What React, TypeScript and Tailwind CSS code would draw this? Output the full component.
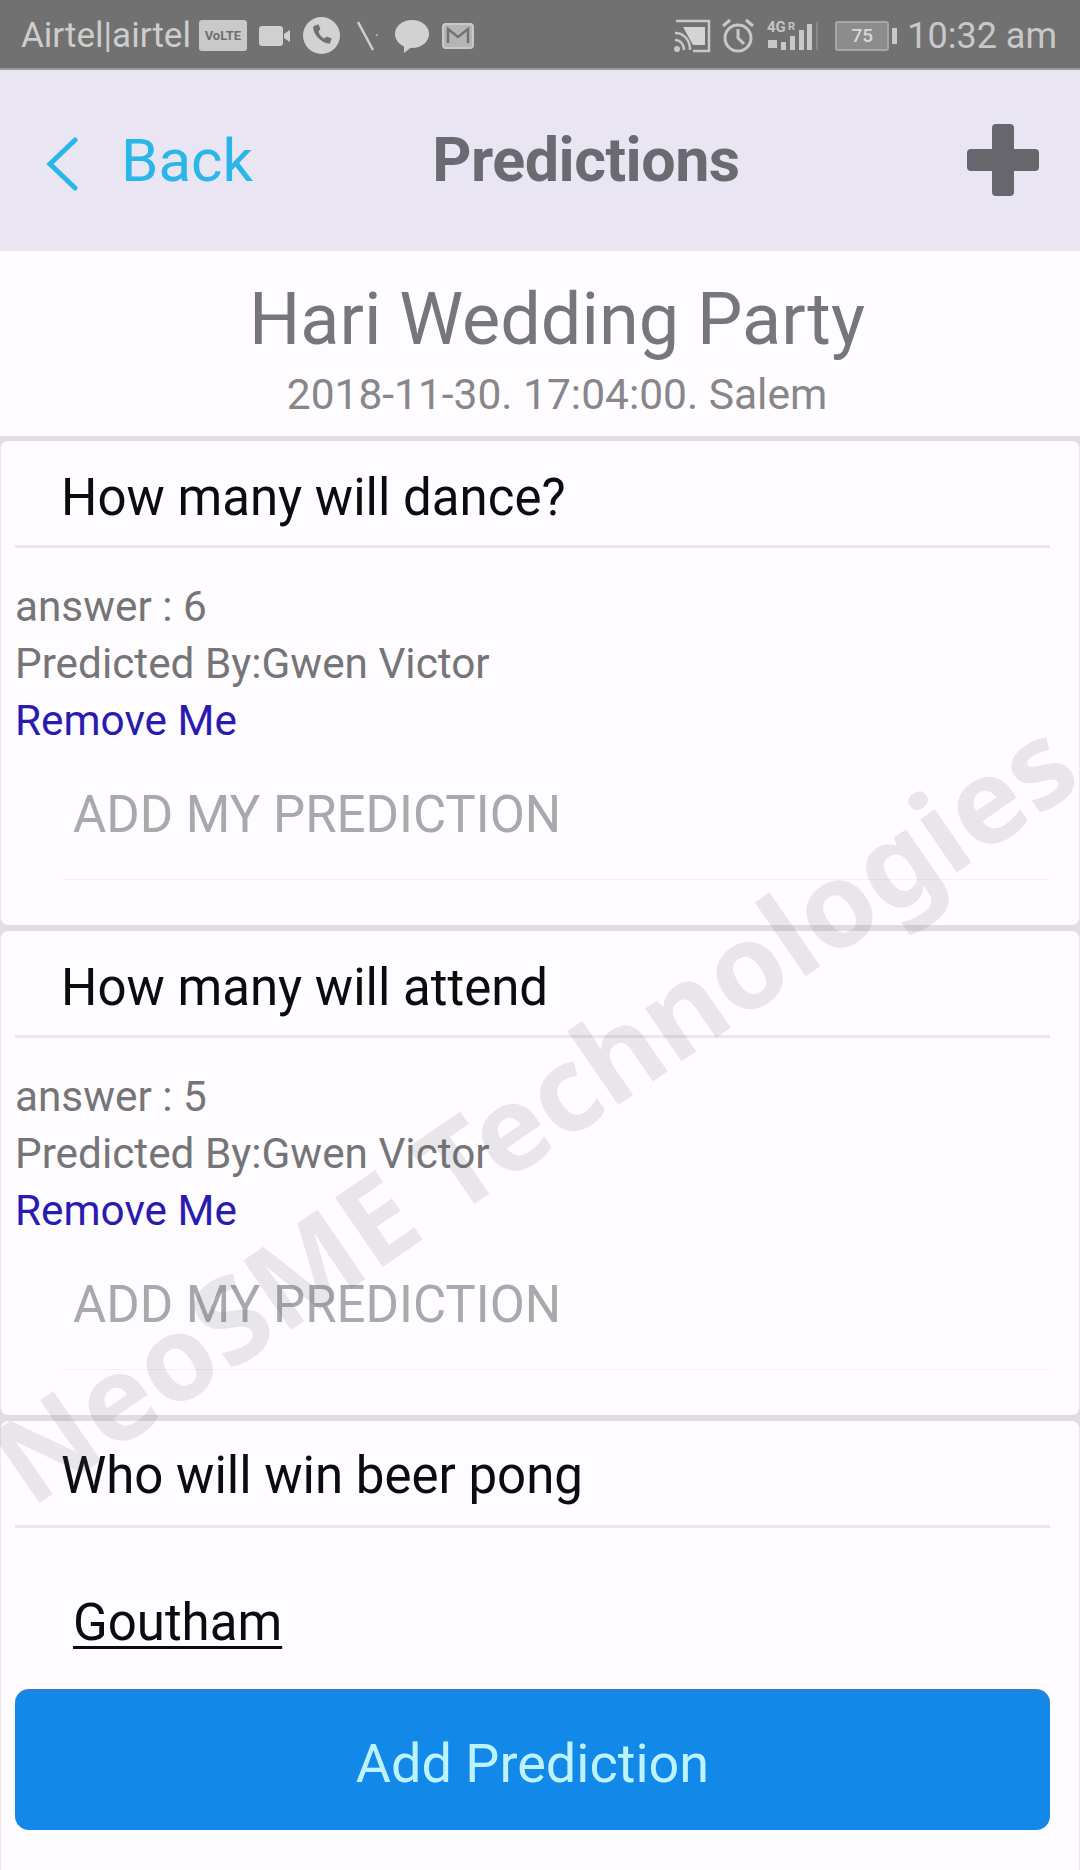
const roboto = "font-['Roboto',sans-serif]";

function StatusIcons() {
  return (
    <div className="flex items-center gap-[12px] ml-[8px]">
      <div className="w-[48px] h-[31px] rounded-[3px] bg-[#c9c9c9] flex items-center justify-center text-[13px] leading-none font-bold text-[#6f6f6f]">VoLTE</div>
      <svg width="32" height="24" viewBox="0 0 32 24"><rect x="0" y="2" width="24" height="20" rx="3" fill="#d0d0d0" /><path d="M25 10l6-4v12l-6-4z" fill="#d0d0d0" /></svg>
      <svg width="37" height="37" viewBox="0 0 36 36"><circle cx="18" cy="18" r="18" fill="#d2d2d2" /><path d="M10 9c-1 6 6 16 16 17l2-5-5-2-2 2c-3-1-5-4-6-7l2-2-2-5z" fill="#717171" /></svg>
      <svg width="24" height="36" viewBox="0 0 24 36" className="ml-[3px]"><path d="M3 4l15 28" stroke="#cfcfcf" strokeWidth="2.5" /><circle cx="22" cy="17" r="1" fill="#bbb" /></svg>
      <svg width="36" height="36" viewBox="0 0 36 36" className="ml-[3px]"><ellipse cx="18" cy="16" rx="17" ry="14" fill="#d2d2d2" /><path d="M10 26l0 9 9-7z" fill="#d2d2d2" /></svg>
      <svg width="32" height="26" viewBox="0 0 32 26"><rect x="1" y="1" width="30" height="24" rx="3" fill="#b5b5b5" stroke="#c9c9c9" strokeWidth="2" /><path d="M6 20V6l10 8 10-8v14" fill="none" stroke="#717171" strokeWidth="2.5" /></svg>
    </div>
  );
}

function StatusRight() {
  return (
    <div className="flex items-center">
      <svg width="38" height="34" viewBox="0 0 38 34"><path d="M3 2h33v30H20" fill="none" stroke="#c8c8c8" strokeWidth="2.5" /><path d="M10 8h22v18H20z" fill="#d4d4d4" /><path d="M2 14c9 0 15 7 15 17M2 21c5 0 9 4 9 10" fill="none" stroke="#c8c8c8" strokeWidth="2.5" /><circle cx="4" cy="30" r="3" fill="#c8c8c8" /></svg>
      <svg width="34" height="36" viewBox="0 0 34 36" className="ml-[10px]"><circle cx="17" cy="20" r="13" fill="none" stroke="#c8c8c8" strokeWidth="3" /><path d="M17 11v9l6 6M2 8l7-6M32 8l-7-6" fill="none" stroke="#c8c8c8" strokeWidth="3" /></svg>
      <svg width="54" height="36" viewBox="0 0 54 36" className="ml-[11px]">
        <text x="1" y="14" fontSize="15" fontWeight="700" fill="#c4c4c4" fontFamily="Roboto">4G</text>
        <text x="22" y="12" fontSize="11" fontWeight="700" fill="#c4c4c4" fontFamily="Roboto">R</text>
        <path d="M2 22h9v8H2zM15 24h5v8h-5zM24 18h5v14h-5zM33 12h5v20h-5zM41 6h5v26h-5z" fill="#c8c8c8" />
        <path d="M50 4h2v28h-2z" fill="#8a8a8a" />
      </svg>
      <div className="ml-[15px] flex items-center">
        <div className="w-[54px] h-[30px] rounded-[3px] border-2 border-[#a5a5a5] bg-[#8c8c8c] flex items-center justify-center text-[19px] leading-none font-medium text-[#d8d8d8]">75</div>
        <div className="ml-[3px] w-[5px] h-[16px] bg-[#c8c8c8]" />
      </div>
      <span className="ml-[10px] text-[36px] leading-none text-[#c8c8c8]">10:32 am</span>
    </div>
  );
}

function QuestionCard({ question, answer }: { question: string; answer: string }) {
  return (
    <div className="h-[484px] rounded-[8px] border-x border-[#ece9ee] bg-[#fefcfe] pl-[14px] pr-[29px]">
      <div className="h-[107px] border-b-[3px] border-[#e9e7eb] pl-[46px] pt-[10px] flex items-center text-[51px] text-[#0c0c0e]">{question}</div>
      <div className="pt-[30px] text-[42.3px] leading-[57px] text-[#757577]">
        <p>answer : {answer}</p>
        <p>Predicted By:Gwen Victor</p>
        <p className="text-[#2a1bb0]">Remove Me</p>
      </div>
      <div className="ml-[47px] mt-[8px] h-[123px] border-b border-[#f2f0f3] pl-[11px] pb-[7px] flex items-center text-[51px] leading-none text-[#a9a9ab]">ADD MY PREDICTION</div>
    </div>
  );
}

export default function App() {
  return (
    <div className={`${roboto} relative w-[1080px] h-[1870px] overflow-hidden bg-[#fefcfe]`}>
      {/* Status bar */}
      <div className="h-[70px] bg-[#717171] border-b-2 border-[#9a9a9a] pl-[21px] pr-[23px] pt-[3px] flex items-center justify-between">
        <div className="flex items-center">
          <span className="text-[35px] leading-none text-[#cdcdcd]">Airtel|airtel</span>
          <StatusIcons />
        </div>
        <StatusRight />
      </div>

      {/* Nav */}
      <div className="h-[181px] bg-[#e9e5f2] flex items-center justify-between pl-[45px] pr-[41px]">
        <div className="flex items-center text-[#2bb6ea]">
          <svg width="34" height="54" viewBox="0 0 34 54" className="mt-[6px]"><path d="M30 3L5 27l25 24" fill="none" stroke="#2bb6ea" strokeWidth="5" strokeLinecap="round" /></svg>
          <span className="ml-[42px] text-[60px] leading-none">Back</span>
        </div>
        <span className="ml-[-48px] text-[61px] leading-none font-bold text-[#6b6a70] tracking-[-0.5px]">Predictions</span>
        <svg width="72" height="72" viewBox="0 0 72 72" className="mb-[2px]"><rect x="25" y="0" width="22" height="72" rx="4" fill="#67666c" /><rect x="0" y="25" width="72" height="22" rx="4" fill="#67666c" /></svg>
      </div>

      {/* Event heading */}
      <div className="h-[185px] flex flex-col items-center pl-[34px]">
        <h1 className="mt-[27px] text-[72px] leading-[84px] text-[#77767b]">Hari Wedding Party</h1>
        <p className="mt-[8px] text-[42.5px] leading-[50px] text-[#87868a]">2018-11-30. 17:04:00. Salem</p>
      </div>

      <div className="flex flex-col gap-[6px] bg-[#dfdde2] pt-[5px]">
        <QuestionCard question="How many will dance?" answer="6" />
        <QuestionCard question="How many will attend" answer="5" />

        {/* Last question, still open */}
        <div className="h-[460px] rounded-t-[8px] border-x border-[#ece9ee] bg-[#fefcfe] pl-[14px] pr-[29px]">
          <div className="h-[107px] border-b-[3px] border-[#e9e7eb] pl-[46px] pt-[6px] flex items-center text-[51px] text-[#0c0c0e]">Who will win beer pong</div>
          <div className="h-[161px] pl-[58px] pt-[69px]">
            <span className="text-[51px] leading-none text-[#0c0c0e] underline underline-offset-[6px] decoration-[3px]">Goutham</span>
          </div>
          <button className="w-full h-[141px] rounded-[14px] border-t-2 border-[#3b7fc0] bg-[#1289e8] pt-[6px] text-[54px] text-[#bdf2ff]">Add Prediction</button>
        </div>
      </div>

      {/* Watermark */}
      <div className="absolute left-[-95px] top-[1090px] w-[1140px] text-center origin-center rotate-[-34.5deg] font-['Noto_Sans',sans-serif] text-[118px] leading-none font-bold text-[#5f5568]/13 pointer-events-none whitespace-nowrap">NeoSME Technologies</div>
    </div>
  );
}
